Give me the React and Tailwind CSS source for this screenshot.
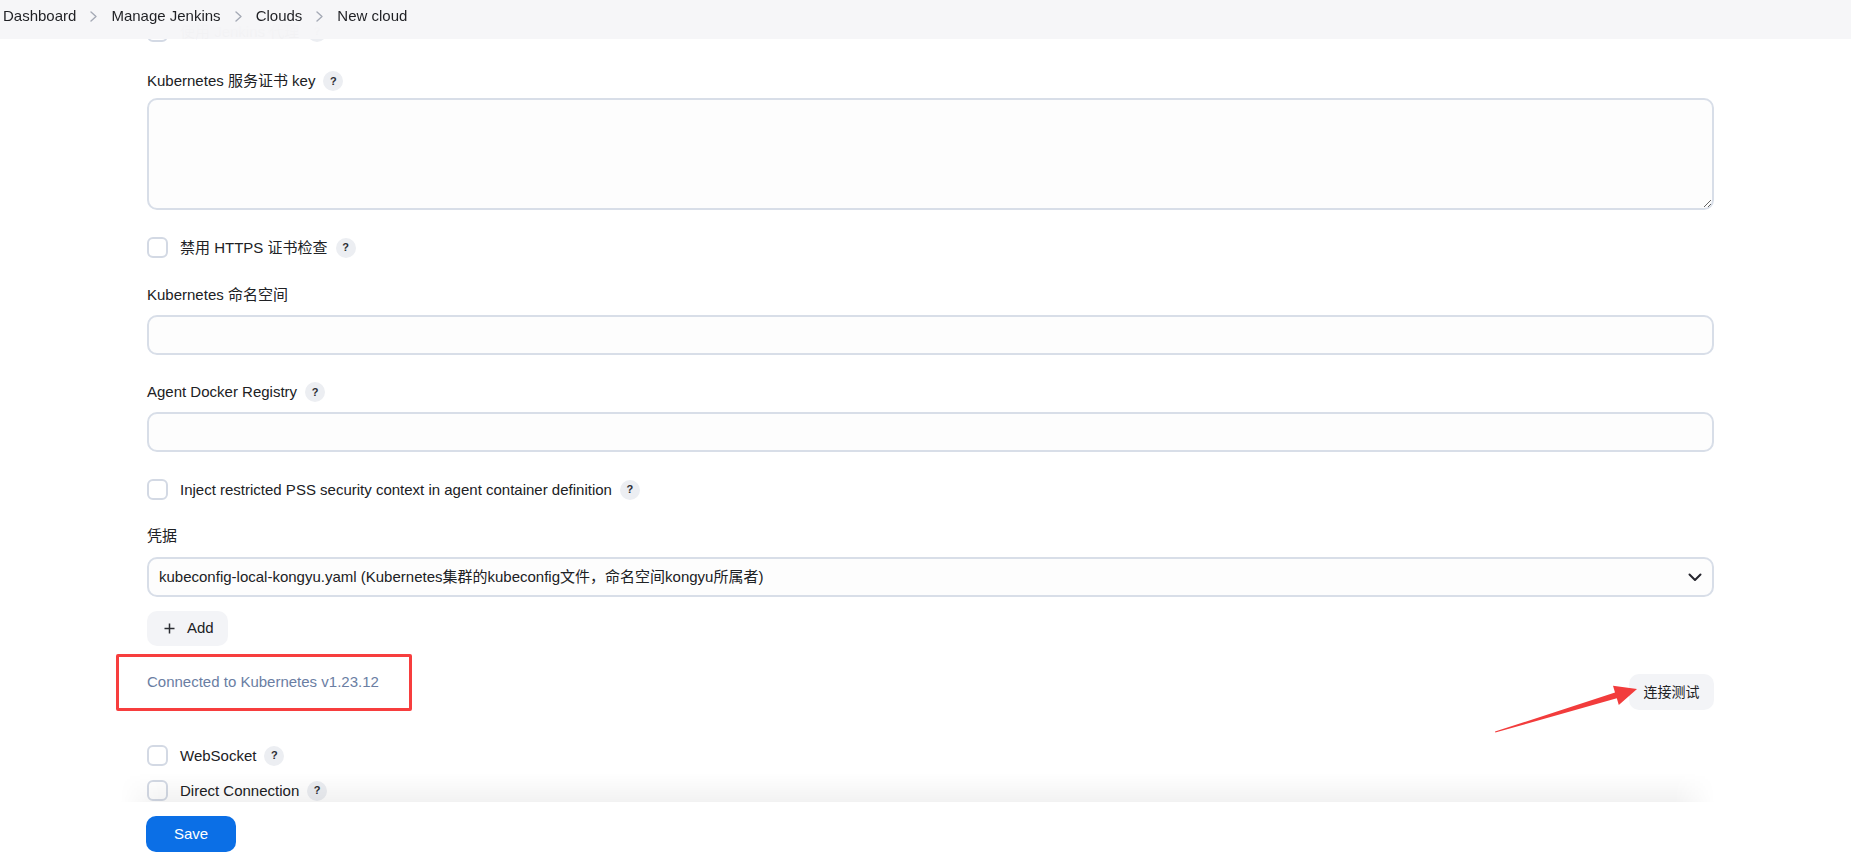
import React from 'react';

const font = "font-['Liberation_Sans','Noto_Sans_CJK_SC',sans-serif]";

const Help = () => (
  <span className="ml-2 flex h-5 w-5 shrink-0 items-center justify-center rounded-full bg-[#eceef2] text-[11px] font-bold text-[#2b2d33]">
    ?
  </span>
);

const Checkbox = () => (
  <span className="h-[21px] w-[21px] shrink-0 rounded-[6px] border-2 border-[#d3d9e4] bg-white" />
);

const CheckRow = ({ label, help = true, className = '' }) => (
  <div className={`flex h-[21px] items-center ${className}`}>
    <Checkbox />
    <span className="ml-3 text-[15px] leading-5 text-[#202124]">{label}</span>
    {help && <Help />}
  </div>
);

const Label = ({ children, help = false, className = '' }) => (
  <div className={`flex h-5 items-center ${className}`}>
    <span className="text-[15px] leading-5 text-[#202124]">{children}</span>
    {help && <Help />}
  </div>
);

const Chevron = () => (
  <svg width="7" height="11" viewBox="0 0 7 11" fill="none">
    <path d="M1 1l5 4.5L1 10" stroke="#a5aab6" strokeWidth="1.4" strokeLinecap="round" strokeLinejoin="round" />
  </svg>
);

const crumbs = ['Dashboard', 'Manage Jenkins', 'Clouds', 'New cloud'];

export default function App() {
  return (
    <div className={`relative h-[857px] w-[1851px] overflow-hidden bg-white ${font}`}>
      <main className="pl-[147px] pt-[21px]">
        <div className="flex w-[1567px] flex-col">
          <CheckRow label="使用 Jenkins 代理" />

          <Label help className="mt-[29px]">Kubernetes 服务证书 key</Label>
          <textarea className="mt-[7px] h-[112px] w-full resize-y rounded-[10px] border-2 border-[#d8dee8] bg-[#fdfdfd] outline-none" />

          <CheckRow label="禁用 HTTPS 证书检查" className="mt-[27px]" />

          <Label className="mt-[27px]">Kubernetes 命名空间</Label>
          <div className="mt-[10px] h-[40px] w-full rounded-[10px] border-2 border-[#d8dee8] bg-[#fdfdfd]" />

          <Label help className="mt-[27px]">Agent Docker Registry</Label>
          <div className="mt-[10px] h-[40px] w-full rounded-[10px] border-2 border-[#d8dee8] bg-[#fdfdfd]" />

          <CheckRow label="Inject restricted PSS security context in agent container definition" className="mt-[27px]" />

          <Label className="mt-[26px]">凭据</Label>
          <div className="mt-[11px] flex h-[40px] w-full items-center justify-between rounded-[10px] border-2 border-[#d8dee8] bg-[#fdfdfd] pl-[10px] pr-[10px]">
            <span className="text-[15px] text-[#202124]">
              kubeconfig-local-kongyu.yaml (Kubernetes集群的kubeconfig文件，命名空间kongyu所属者)
            </span>
            <svg width="14" height="9" viewBox="0 0 14 9" fill="none">
              <path d="M1.5 1.5l5.5 5.5 5.5-5.5" stroke="#25252d" strokeWidth="2" strokeLinecap="round" strokeLinejoin="round" />
            </svg>
          </div>

          <div className="mt-[14px] flex">
            <button className="flex h-[35px] items-center gap-3 rounded-[10px] bg-[#f3f4f7] pl-[17px] pr-[14px] text-[15px] text-[#202124]">
              <svg width="11" height="11" viewBox="0 0 11 11" fill="none">
                <path d="M5.5 0.5v10M0.5 5.5h10" stroke="#2b2d33" strokeWidth="1.5" />
              </svg>
              Add
            </button>
          </div>

          <div className="mt-[26px] flex items-start justify-between">
            <span className="text-[15px] leading-5 text-[#6a7ea3]">Connected to Kubernetes v1.23.12</span>
            <button className="mt-[2px] flex h-[36px] w-[85px] items-center justify-center rounded-[10px] bg-[#f3f4f7] text-[14px] text-[#202124]">
              连接测试
            </button>
          </div>

          <CheckRow label="WebSocket" className="mt-[35px]" />
          <CheckRow label="Direct Connection" className="mt-[14px]" />
        </div>
      </main>

      {/* sticky breadcrumb bar */}
      <header className="absolute left-0 right-0 top-0 flex h-[39px] items-start bg-[#f6f6f8]/[0.96] pl-[3px] pt-[6px] backdrop-blur-md">
        <nav className="flex h-5 items-center gap-[14px] text-[15px] leading-5 text-[#1f2024]">
          {crumbs.map((c, i) => (
            <React.Fragment key={c}>
              {i > 0 && <Chevron />}
              <span>{c}</span>
            </React.Fragment>
          ))}
        </nav>
      </header>

      {/* sticky bottom bar */}
      <footer className="absolute bottom-0 left-0 right-0 h-[55px] bg-white">
        <div className="absolute left-[120px] top-[-29px] h-[29px] w-[1595px] bg-linear-to-b from-transparent to-black/[0.05] [mask-image:linear-gradient(to_right,transparent,black_40px,black_calc(100%-40px),transparent)]" />
        <button className="ml-[146px] mt-[14px] h-[36px] w-[90px] rounded-[10px] bg-[#0b6fe6] text-[15px] font-medium text-white">
          Save
        </button>
      </footer>

      {/* annotation overlays */}
      <div className="pointer-events-none absolute left-[116px] top-[654px] h-[57px] w-[296px] rounded-[2px] border-[3px] border-[#f73e3e]" />
      <svg className="pointer-events-none absolute left-0 top-0" width="1851" height="857" viewBox="0 0 1851 857">
        <polygon
          points="1495,731.6 1615,692.4 1613,685.7 1637,689 1618.8,704.9 1616.8,698.2 1495.3,732.6"
          fill="#f23c3c"
        />
      </svg>
    </div>
  );
}
